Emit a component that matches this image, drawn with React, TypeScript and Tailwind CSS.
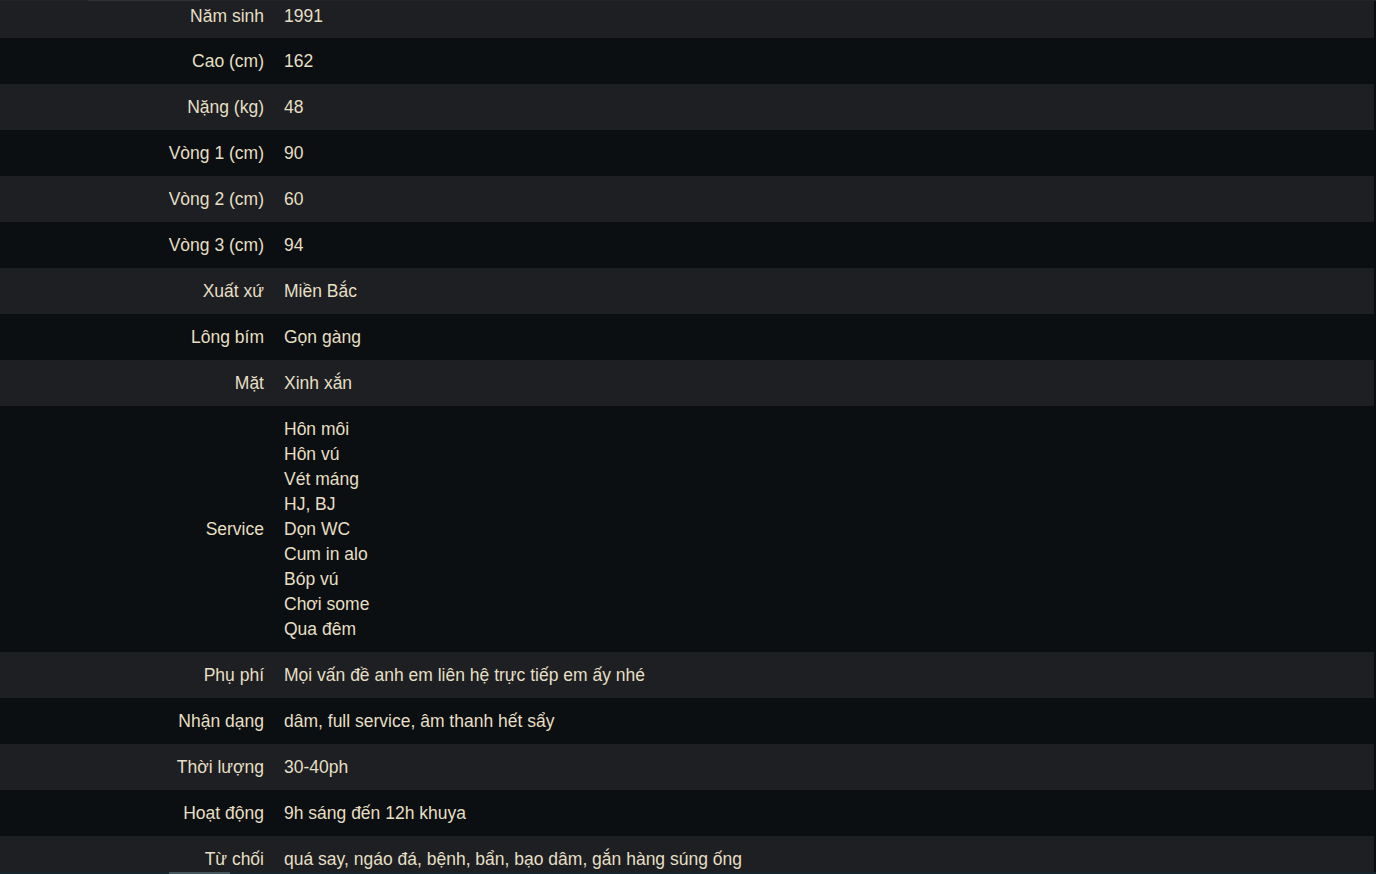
import React from "react";

type Row = { label: string; value: string | string[] };

const rows: Row[] = [
  { label: "Năm sinh", value: "1991" },
  { label: "Cao (cm)", value: "162" },
  { label: "Nặng (kg)", value: "48" },
  { label: "Vòng 1 (cm)", value: "90" },
  { label: "Vòng 2 (cm)", value: "60" },
  { label: "Vòng 3 (cm)", value: "94" },
  { label: "Xuất xứ", value: "Miền Bắc" },
  { label: "Lông bím", value: "Gọn gàng" },
  { label: "Mặt", value: "Xinh xắn" },
  {
    label: "Service",
    value: ["Hôn môi", "Hôn vú", "Vét máng", "HJ, BJ", "Dọn WC", "Cum in alo", "Bóp vú", "Chơi some", "Qua đêm"],
  },
  { label: "Phụ phí", value: "Mọi vấn đề anh em liên hệ trực tiếp em ấy nhé" },
  { label: "Nhận dạng", value: "dâm, full service, âm thanh hết sẩy" },
  { label: "Thời lượng", value: "30-40ph" },
  { label: "Hoạt động", value: "9h sáng đến 12h khuya" },
  { label: "Từ chối", value: "quá say, ngáo đá, bệnh, bẩn, bạo dâm, gắn hàng súng ống" },
];

export default function App() {
  return (
    <div
      className="flex h-[874px] flex-col overflow-hidden bg-[#0c0f12] text-[17.5px] leading-[25px] text-[#e6dfc3]"
      style={{ fontFamily: '"Liberation Sans", Arial, sans-serif' }}
    >
      {/* top scroll edge */}
      <div className="flex h-px shrink-0 bg-[#222428]">
        <div className="ml-[88px] w-[112px] bg-[#303236]" />
      </div>

      <div className="flex min-h-0 flex-1">
        <div className="min-w-0 flex-1 overflow-hidden">
          {rows.map((r, i) => {
            const first = i === 0;
            const pad = first ? "pt-[3px] pb-[9px]" : "pt-[11px] pb-[10px]";
            return (
              <div
                key={r.label}
                className={`grid grid-cols-[274px_1fr] ${i % 2 === 0 ? "bg-[#1d1f23]" : "bg-[#0c0f12]"}`}
              >
                <div className={`flex items-center justify-end pr-[10px] ${pad}`}>{r.label}</div>
                <div className={`pl-[10px] ${pad}`}>
                  {Array.isArray(r.value) ? r.value.map((v) => <div key={v}>{v}</div>) : r.value}
                </div>
              </div>
            );
          })}
        </div>
        <div className="w-[2px] shrink-0 bg-[#0a0c0e]" />
      </div>

      {/* bottom scroll edge */}
      <div className="flex h-[2px] shrink-0 bg-[#17242b]">
        <div className="ml-[169px] w-[61px] bg-[#46565d]" />
      </div>
    </div>
  );
}
